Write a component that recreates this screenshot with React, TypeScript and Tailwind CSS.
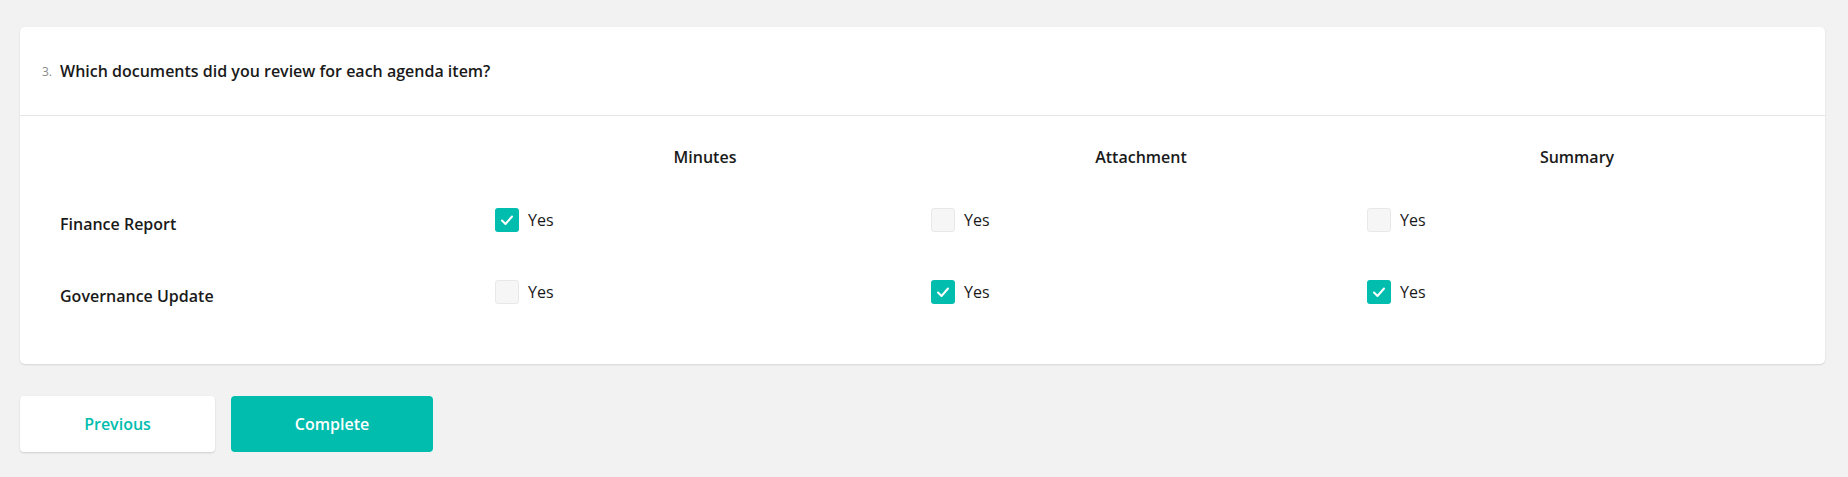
import React from 'react';

interface Row {
  label: string;
  values: boolean[];
}

const columns = ['Minutes', 'Attachment', 'Summary'];

const rows: Row[] = [
  { label: 'Finance Report', values: [true, false, false] },
  { label: 'Governance Update', values: [false, true, true] },
];

function Checkbox({ checked }: { checked: boolean }) {
  if (checked) {
    return (
      <span className="flex h-6 w-6 items-center justify-center rounded-[3px] bg-[#00bdae]">
        <svg width="16" height="16" viewBox="0 0 16 16" fill="none">
          <polyline points="3,8.5 6.5,12 13,4.5" stroke="#fff" strokeWidth="2" strokeLinecap="round" strokeLinejoin="round" />
        </svg>
      </span>
    );
  }
  return <span className="block h-6 w-6 rounded-[3px] border border-[#e8e8e8] bg-[#f6f6f6]" />;
}

export default function App() {
  return (
    <div className="min-h-screen bg-[#f2f2f2] pl-5 pr-[23px] pt-[27px] font-['Open_Sans',sans-serif] text-[#1a1a1a]">
      {/* Question card */}
      <div className="rounded-[5px] bg-white shadow-[0_1px_2px_rgba(0,0,0,0.12)]">
        <div className="flex items-center border-b border-[#e6e6e6] px-[22px] py-[34px]">
          <span className="mr-[8px] mt-[2px] text-[12px] text-[#8a8a8a]">3.</span>
          <span className="text-[16px] font-semibold leading-5">Which documents did you review for each agenda item?</span>
        </div>

        <div className="grid grid-cols-[435px_1fr_1fr_1fr] pb-9 pl-10 pr-[22px]">
          <div className="h-[68px]" />
          {columns.map((c) => (
            <div key={c} className="h-[68px] pr-4 pt-[29px] text-center text-[16px] font-semibold leading-6">
              {c}
            </div>
          ))}

          {rows.map((r) => (
            <React.Fragment key={r.label}>
              <div className="flex h-[72px] items-center">
                <span className="mt-2 text-[16px] font-semibold leading-6">{r.label}</span>
              </div>
              {r.values.map((v, i) => (
                <div key={i} className="flex h-[72px] items-center gap-[9px]">
                  <Checkbox checked={v} />
                  <span className="text-[16px] leading-6">Yes</span>
                </div>
              ))}
            </React.Fragment>
          ))}
        </div>
      </div>

      {/* Footer buttons */}
      <div className="mt-8 flex gap-4">
        <button className="h-14 w-[195px] rounded-[4px] bg-white text-[16px] font-semibold text-[#00bdae] shadow-[0_1px_2px_rgba(0,0,0,0.15)]">
          Previous
        </button>
        <button className="h-14 w-[202px] rounded-[4px] bg-[#00bdae] text-[16px] font-semibold text-white">
          Complete
        </button>
      </div>
    </div>
  );
}
